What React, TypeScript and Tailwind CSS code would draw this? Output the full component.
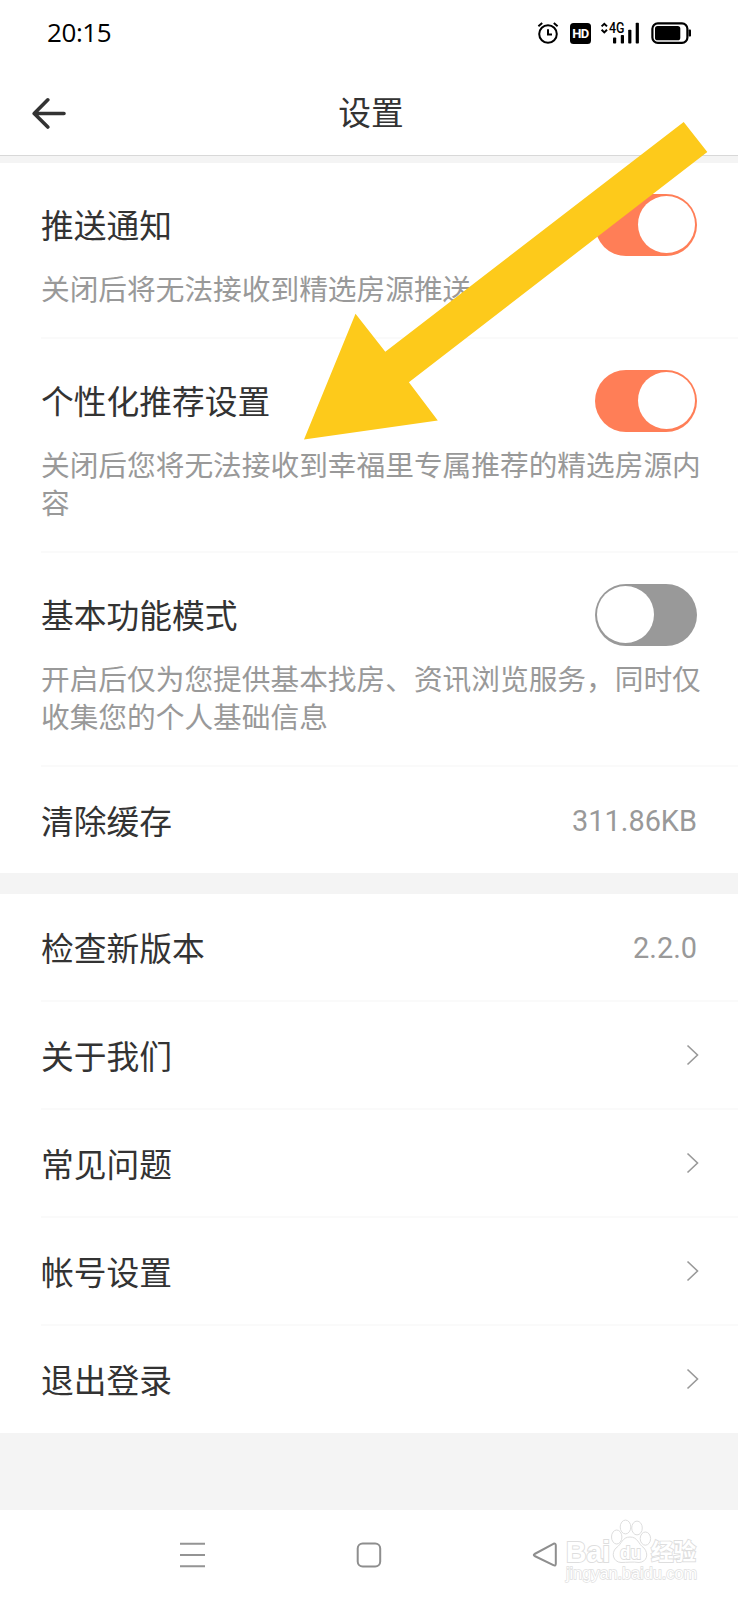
import type { ReactNode } from "react";

function Toggle({ on }: { on: boolean }) {
  return (
    <span
      className={
        on
          ? "flex h-[62px] w-[102.5px] shrink-0 items-center justify-end rounded-full bg-[#ff7e57] px-[2px]"
          : "flex h-[62px] w-[102.5px] shrink-0 items-center justify-start rounded-full bg-[#999999] px-[2px]"
      }
    >
      <span className="size-[57.5px] rounded-full bg-white" />
    </span>
  );
}

function StatusBar() {
  return (
    <div className="flex h-[66px] items-center justify-between pr-[46px] pl-[47px]">
      <span className="-mt-[2px] font-['Open_Sans',sans-serif] text-[26px] leading-none tracking-[-0.4px] text-black">20:15</span>
      <div className="flex items-center">
        <svg width="22" height="24" viewBox="0 0 22 24" fill="none" stroke="#000" strokeWidth="2">
          <circle cx="11" cy="13" r="8.8" />
          <path d="M11 8.2V13.6H15M1.4 5.2L5.2 2M20.6 5.2L16.8 2" />
        </svg>
        <span className="mt-px ml-[11px] flex size-[21px] items-center justify-center rounded-[3.5px] bg-black font-[Roboto,sans-serif] text-[13px] leading-none font-bold tracking-[-0.6px] text-white">
          HD
        </span>
        <svg className="ml-[9px]" width="40" height="24" viewBox="0 0 40 24">
          <path d="M1.6 5.4L4.3 2.8L7 5.4M1.6 8.8L4.3 11.4L7 8.8" fill="none" stroke="#000" strokeWidth="2" />
          <text x="9" y="11.8" textLength="15.5" lengthAdjust="spacingAndGlyphs" fontFamily="Roboto, sans-serif" fontWeight="500" fontSize="14" fill="#000">4G</text>
          <rect x="13" y="16.5" width="3.2" height="6" rx="0.8" />
          <rect x="20.8" y="14" width="3.2" height="8.5" rx="0.8" />
          <rect x="28.2" y="8.7" width="3.2" height="13.8" rx="0.8" />
          <rect x="35.7" y="1.7" width="3.2" height="20.8" rx="0.8" />
        </svg>
        <svg className="ml-[11px]" width="41" height="24" viewBox="0 0 41 24">
          <rect x="1.4" y="2.4" width="35" height="19.4" rx="5.4" fill="none" stroke="#000" strokeWidth="2.2" />
          <rect x="4" y="5" width="25.3" height="14.3" rx="2.6" />
          <rect x="37.6" y="8.5" width="2.4" height="7" rx="0.8" />
        </svg>
      </div>
    </div>
  );
}

function Header() {
  return (
    <header className="flex h-[90px] items-center border-b border-[#d8d8d8] pl-8">
      <svg className="mt-[4px]" width="34" height="32" viewBox="0 0 34 32" fill="none" stroke="#333" strokeWidth="3.6" strokeLinecap="round" strokeLinejoin="round">
        <path d="M15.8 2.8L2.2 16.5L15.8 30M2.4 16.5H32" />
      </svg>
      <h1 className="flex-1 pt-px pr-[62px] text-center text-[32.7px] leading-none text-[#333333]">设置</h1>
    </header>
  );
}

function SwitchRow({ title, on, children }: { title: string; on: boolean; children: ReactNode }) {
  return (
    <section className="ml-[41px] border-b-2 border-[#fafafa] pt-[31px] pb-[30px]">
      <div className="flex h-[62px] items-center justify-between pr-[41px]">
        <h2 className="text-[32.75px] leading-none">{title}</h2>
        <Toggle on={on} />
      </div>
      <p className="mt-[13px] pr-[32px] text-[28.7px] leading-[38px] text-[#999999]">{children}</p>
    </section>
  );
}

function Chevron() {
  return (
    <svg className="-mr-[3px]" width="14" height="22" viewBox="0 0 14 22" fill="none" stroke="#999" strokeWidth="1.6">
      <path d="M1.5 1.5L11.5 11L1.5 20.5" />
    </svg>
  );
}

function Row({ title, value, last = false }: { title: string; value?: string; last?: boolean }) {
  return (
    <div
      className={
        last
          ? "ml-[41px] flex h-[106.5px] items-center justify-between pr-[41px]"
          : "ml-[41px] flex h-[108px] items-center justify-between border-b-2 border-[#fafafa] pr-[41px]"
      }
    >
      <span className="pt-px text-[32.75px] leading-none">{title}</span>
      {value ? <span className="pt-[3px] font-[Roboto,sans-serif] text-[28.9px] leading-none text-[#999999]">{value}</span> : <Chevron />}
    </div>
  );
}

function NavigationBar() {
  return (
    <nav className="flex h-[90px] items-center pl-[180px]">
      <svg width="25" height="26" viewBox="0 0 25 26" stroke="#949494" strokeWidth="2">
        <path d="M0 1.8H25M0 13H25M0 24.2H25" />
      </svg>
      <svg className="ml-[151px]" width="26" height="26" viewBox="0 0 26 26" fill="none" stroke="#8e8e8e" strokeWidth="2">
        <rect x="1.7" y="1.5" width="22.5" height="23" rx="5" />
      </svg>
      <svg className="ml-[150px]" width="26" height="26" viewBox="0 0 26 26" fill="none" stroke="#8e8e8e" strokeWidth="2" strokeLinejoin="round">
        <path d="M2.6 12L21.4 1.8Q23.8 1 23.8 3.4V21.6Q23.8 24.4 21.4 23.2L2.6 14Q1 13 2.6 12Z" />
      </svg>
    </nav>
  );
}

function Watermark() {
  return (
    <svg className="absolute top-[1516px] left-[562px]" width="140" height="72" viewBox="0 0 140 72" fill="#fff" stroke="#dedede" strokeWidth="1">
      <text x="4" y="45.5" textLength="44" lengthAdjust="spacingAndGlyphs" fontFamily="Liberation Sans, sans-serif" fontWeight="700" fontSize="30" paintOrder="stroke" strokeWidth="2">Bai</text>
      <ellipse cx="54.7" cy="21" rx="5.2" ry="7" />
      <ellipse cx="63.5" cy="11" rx="5.3" ry="6.9" />
      <ellipse cx="75" cy="12" rx="5.3" ry="6.9" />
      <ellipse cx="83.4" cy="22.6" rx="5.2" ry="6.6" />
      <path d="M68 21C60 21 60 28 54 32C49 37 51 46 59 46.5C65 46.5 71 45.5 77 46.5C85 46 87 38 82 32C76 28 76 21 68 21Z" />
      <text x="58" y="43" textLength="21" lengthAdjust="spacingAndGlyphs" fontFamily="Liberation Sans, sans-serif" fontWeight="700" fontSize="19" paintOrder="stroke" strokeWidth="1.8">du</text>
      <text x="89" y="43.5" textLength="45" lengthAdjust="spacingAndGlyphs" fontFamily="Noto Sans CJK SC, sans-serif" fontWeight="700" fontSize="23" paintOrder="stroke" strokeWidth="1.8">经验</text>
      <text x="4" y="62.5" textLength="131" lengthAdjust="spacingAndGlyphs" fontFamily="Liberation Sans, sans-serif" fontSize="17" paintOrder="stroke" strokeWidth="1.4">jingyan.baidu.com</text>
    </svg>
  );
}

function PointerArrow() {
  return (
    <svg className="pointer-events-none absolute top-[120px] left-[300px]" width="410" height="322" viewBox="300 120 410 322">
      <polygon points="304,439.5 355.5,313.7 385.3,351.7 683.7,122 707.3,152 408.9,382.2 437.8,420.6" fill="#fdca1b" />
    </svg>
  );
}

export default function App() {
  return (
    <main className="relative flex h-[1600px] w-[738px] flex-col overflow-hidden bg-white font-['Noto_Sans_CJK_SC',sans-serif] text-[#333333]">
      <StatusBar />
      <Header />
      <div className="h-[6.5px] bg-[#f4f4f4]" />
      <SwitchRow title="推送通知" on>关闭后将无法接收到精选房源推送</SwitchRow>
      <SwitchRow title="个性化推荐设置" on>关闭后您将无法接收到幸福里专属推荐的精选房源内容</SwitchRow>
      <SwitchRow title="基本功能模式" on={false}>开启后仅为您提供基本找房、资讯浏览服务，同时仅收集您的个人基础信息</SwitchRow>
      <Row title="清除缓存" value="311.86KB" last />
      <div className="h-[21px] bg-[#f4f4f4]" />
      <Row title="检查新版本" value="2.2.0" />
      <Row title="关于我们" />
      <Row title="常见问题" />
      <Row title="帐号设置" />
      <Row title="退出登录" last />
      <div className="flex-1 bg-[#f4f4f4]" />
      <NavigationBar />
      <Watermark />
      <PointerArrow />
    </main>
  );
}
